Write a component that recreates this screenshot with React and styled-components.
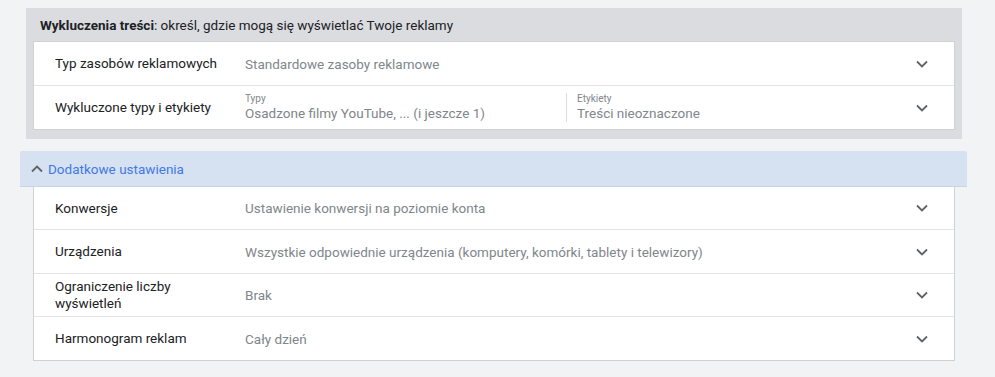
import React from "react";
import styled, { createGlobalStyle } from "styled-components";

const Global = createGlobalStyle`
  html, body { margin: 0; padding: 0; background: #f1f3f4; }
  body { font-family: Roboto, "Noto Sans", Arial, sans-serif; color: #202124; }
`;

const Page = styled.div`
  padding-top: 8px;
  width: 995px;
  height: 377px;
  box-sizing: border-box;
  overflow: hidden;
`;

const GraySection = styled.section`
  margin-left: 26px;
  width: 936px;
  background: #dadce0;
  padding: 0 7px 9px 7px;
  box-sizing: border-box;
`;

const SectionTitle = styled.div`
  height: 33px;
  display: flex;
  align-items: center;
  padding-left: 7px;
  font-size: 13.5px;
  color: #202124;
  b { font-weight: 700; }
`;

const Card = styled.div`
  background: #fff;
  border: 1px solid #cfd1d4;
  border-top: ${(p) => (p.$noTop ? "none" : "1px solid #cfd1d4")};
  box-sizing: border-box;
  margin-left: ${(p) => p.$ml || 0}px;
  width: ${(p) => p.$w || "auto"};
`;

const Row = styled.div`
  display: flex;
  align-items: center;
  height: ${(p) => p.$h || 43}px;
  border-top: ${(p) => (p.$first ? "none" : "1px solid #e3e4e6")};
  padding-left: 21px;
  padding-right: 20px;
  box-sizing: border-box;
`;

const Label = styled.div`
  width: 190px;
  padding-right: 20px;
  box-sizing: border-box;
  flex-shrink: 0;
  font-size: 13.5px;
  line-height: 17px;
  color: #202124;
`;

const Value = styled.div`
  flex: 1;
  font-size: 13.5px;
  color: #80868b;
  white-space: nowrap;
`;

const Split = styled.div`
  flex: 1;
  display: grid;
  grid-template-columns: 321px 1fr;
`;

const Field = styled.div`
  display: flex;
  flex-direction: column;
  padding-left: ${(p) => (p.$divided ? "10px" : "0")};
  border-left: ${(p) => (p.$divided ? "1px solid #dadce0" : "none")};
`;

const Small = styled.span`
  font-size: 10px;
  line-height: 12px;
  color: #80868b;
`;

const FieldValue = styled.span`
  font-size: 13.5px;
  line-height: 17px;
  color: #80868b;
`;

const IconBox = styled.div`
  width: 24px;
  height: 24px;
  display: flex;
  align-items: center;
  justify-content: center;
  flex-shrink: 0;
`;

const BlueBar = styled.div`
  margin-left: 20px;
  margin-top: 12px;
  width: 947px;
  height: 36px;
  background: #d6e2f2;
  border-radius: 2px 2px 0 0;
  border-bottom: 1px solid #c7d4e6;
  box-sizing: border-box;
  display: flex;
  align-items: center;
  padding-left: 11px;
  gap: 5px;
  font-size: 13.5px;
  color: #4379e6;
`;

const Chevron = ({ up }) => (
  <svg width="12" height="8" viewBox="0 0 12 8">
    <path
      d={up ? "M1 6.5 L6 1.5 L11 6.5" : "M1 1.5 L6 6.5 L11 1.5"}
      fill="none"
      stroke="#5f6368"
      strokeWidth="1.8"
    />
  </svg>
);

const SimpleRow = ({ label, value, first, h }) => (
  <Row $first={first} $h={h}>
    <Label>{label}</Label>
    <Value>{value}</Value>
    <IconBox>
      <Chevron />
    </IconBox>
  </Row>
);

export default function App() {
  return (
    <>
      <Global />
      <Page>
        <GraySection>
          <SectionTitle>
            <span>
              <b>Wykluczenia treści</b>: określ, gdzie mogą się wyświetlać Twoje reklamy
            </span>
          </SectionTitle>
          <Card>
            <SimpleRow first h={43} label="Typ zasobów reklamowych" value="Standardowe zasoby reklamowe" />
            <Row $h={44}>
              <Label>Wykluczone typy i etykiety</Label>
              <Split>
                <Field>
                  <Small>Typy</Small>
                  <FieldValue>Osadzone filmy YouTube, ... (i jeszcze 1)</FieldValue>
                </Field>
                <Field $divided>
                  <Small>Etykiety</Small>
                  <FieldValue>Treści nieoznaczone</FieldValue>
                </Field>
              </Split>
              <IconBox>
                <Chevron />
              </IconBox>
            </Row>
          </Card>
        </GraySection>
        <BlueBar>
          <Chevron up />
          <span>Dodatkowe ustawienia</span>
        </BlueBar>
        <Card $noTop $ml={33} $w="922px">
          <SimpleRow first h={42} label="Konwersje" value="Ustawienie konwersji na poziomie konta" />
          <SimpleRow h={44} label="Urządzenia" value="Wszystkie odpowiednie urządzenia (komputery, komórki, tablety i telewizory)" />
          <SimpleRow h={43} label="Ograniczenie liczby wyświetleń" value="Brak" />
          <SimpleRow h={44} label="Harmonogram reklam" value="Cały dzień" />
        </Card>
      </Page>
    </>
  );
}
